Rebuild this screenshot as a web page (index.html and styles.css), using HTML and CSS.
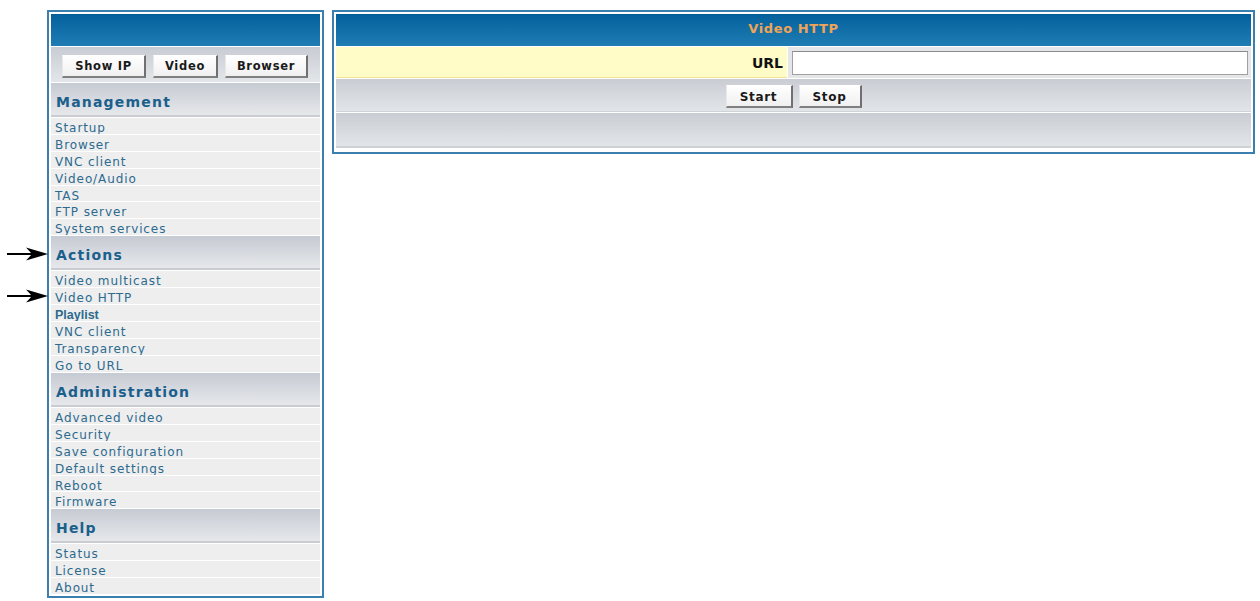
FILE: index.html
```html
<!DOCTYPE html>
<html lang="en">
<head>
  <meta charset="UTF-8" />
  <title>Video HTTP</title>
  <link rel="stylesheet" href="styles.css">
</head>
<body>

<div class="page">
  <div class="menu panel">
    <div class="bar"></div>
    <div class="quick">
      <button class="btn btn-ip">Show IP</button>
      <button class="btn btn-video">Video</button>
      <button class="btn btn-browser">Browser</button>
    </div>

    <div class="group">Management</div>
    <a class="item">Startup</a>
    <a class="item">Browser</a>
    <a class="item">VNC client</a>
    <a class="item">Video/Audio</a>
    <a class="item">TAS</a>
    <a class="item">FTP server</a>
    <a class="item">System services</a>

    <div class="group">Actions</div>
    <a class="item">Video multicast</a>
    <a class="item">Video HTTP</a>
    <a class="item item-alt">Playlist</a>
    <a class="item">VNC client</a>
    <a class="item">Transparency</a>
    <a class="item">Go to URL</a>

    <div class="group">Administration</div>
    <a class="item">Advanced video</a>
    <a class="item">Security</a>
    <a class="item">Save configuration</a>
    <a class="item">Default settings</a>
    <a class="item">Reboot</a>
    <a class="item">Firmware</a>

    <div class="group">Help</div>
    <a class="item">Status</a>
    <a class="item">License</a>
    <a class="item">About</a>
  </div>

  <div class="main panel">
    <div class="bar title">Video HTTP</div>
    <div class="form-row">
      <label class="label" for="url">URL</label>
      <div class="field"><input type="text" id="url" /></div>
    </div>
    <div class="actions">
      <button class="btn btn-start">Start</button>
      <button class="btn btn-stop">Stop</button>
    </div>
    <div class="footer"></div>
  </div>
</div>

<svg class="arrow arrow-1" width="42" height="14" viewBox="0 0 42 14">
  <line x1="0" y1="7" x2="26" y2="7" stroke="#000" stroke-width="2" />
  <polygon points="19,0.5 41,7 19,13.5 25,7" fill="#000" />
</svg>
<svg class="arrow arrow-2" width="42" height="14" viewBox="0 0 42 14">
  <line x1="0" y1="7" x2="26" y2="7" stroke="#000" stroke-width="2" />
  <polygon points="19,0.5 41,7 19,13.5 25,7" fill="#000" />
</svg>

</body>
</html>
```

FILE: styles.css
```css
body { margin: 0; background: #fff; font-family: "DejaVu Sans", Verdana, sans-serif; position: relative; }
.page { display: flex; align-items: flex-start; gap: 8px; padding: 10px 0 0 47px; }

.panel { border: 2px solid #3a7fad; padding: 2px; background: #fff; box-sizing: border-box; display: flex; flex-direction: column; }
.menu { width: 277px; height: 588px; }
.main { width: 923px; height: 144px; }

.bar { height: 32px; background: linear-gradient(#04609b, #1f7db4); flex: none; }
.title { color: #f0a457; font-weight: bold; font-size: 13px; letter-spacing: 0.6px; text-align: center; line-height: 30px; }

.quick { height: 35px; margin-top: 1px; background: linear-gradient(#c8ccd3, #e3e6e9); display: flex; align-items: center; gap: 7px; padding: 4px 0 0 11px; box-sizing: border-box; }

.btn { height: 23px; padding: 1px 0 0; font-family: "DejaVu Sans", Verdana, sans-serif; font-weight: bold; font-size: 11.5px; letter-spacing: 0.7px; color: #1a1a1a; background: linear-gradient(#ffffff, #f0f0f0); border: none; border-left: 1px solid #e8e8e8; border-top: 1px solid #fff; border-right: 2px solid #707070; border-bottom: 2px solid #808080; cursor: pointer; }
.btn-ip { width: 84px; }
.btn-video { width: 65px; }
.btn-browser { width: 83px; }
.btn-start { width: 67px; font-size: 12px; }
.btn-stop { width: 63px; font-size: 12px; }

.group { height: 32px; margin-top: 1px; background: linear-gradient(#c6cad2, #e6e8eb); border-bottom: 2px solid #c9cdd2; color: #1b5f8c; font-weight: bold; font-size: 14px; letter-spacing: 1.2px; line-height: 38px; padding-left: 5px; }
.item { display: block; height: 16px; border-top: 1px solid #fff; background: #eeeeee; color: #2c6a8e; font-size: 12px; letter-spacing: 0.9px; line-height: 20px; padding-left: 4px; white-space: nowrap; overflow: hidden; }
.item-alt { font-family: "Liberation Sans", Arial, sans-serif; font-weight: bold; font-size: 12.5px; letter-spacing: 0; }

.form-row { display: flex; height: 31px; margin-top: 1px; }
.label { width: 451px; background: #fffcc8; border-bottom: 1px solid #f3df9a; box-sizing: border-box; text-align: right; padding-right: 4px; font-weight: bold; font-size: 14px; line-height: 32px; color: #111; }
.field { flex: 1; margin-left: 1px; background: #e4e6e8; display: flex; align-items: center; padding: 0 3px 0 4px; }
.field input { width: 100%; height: 24px; box-sizing: border-box; border: 1px solid #a0a0a0; border-top-color: #8a8a8a; background: #fff; }

.actions { height: 33px; margin-top: 1px; background: linear-gradient(#c9cdd3, #e2e5e8); border-bottom: 1px solid #d0d3d7; box-sizing: border-box; display: flex; justify-content: center; align-items: center; gap: 6px; padding-top: 3px; }
.footer { height: 35px; margin-top: 1px; background: linear-gradient(#c9cdd3, #e2e5e8); border-bottom: 2px solid #cdd0d5; box-sizing: border-box; }

.arrow { position: absolute; left: 7px; }
.arrow-1 { top: 247px; }
.arrow-2 { top: 289px; }
```
